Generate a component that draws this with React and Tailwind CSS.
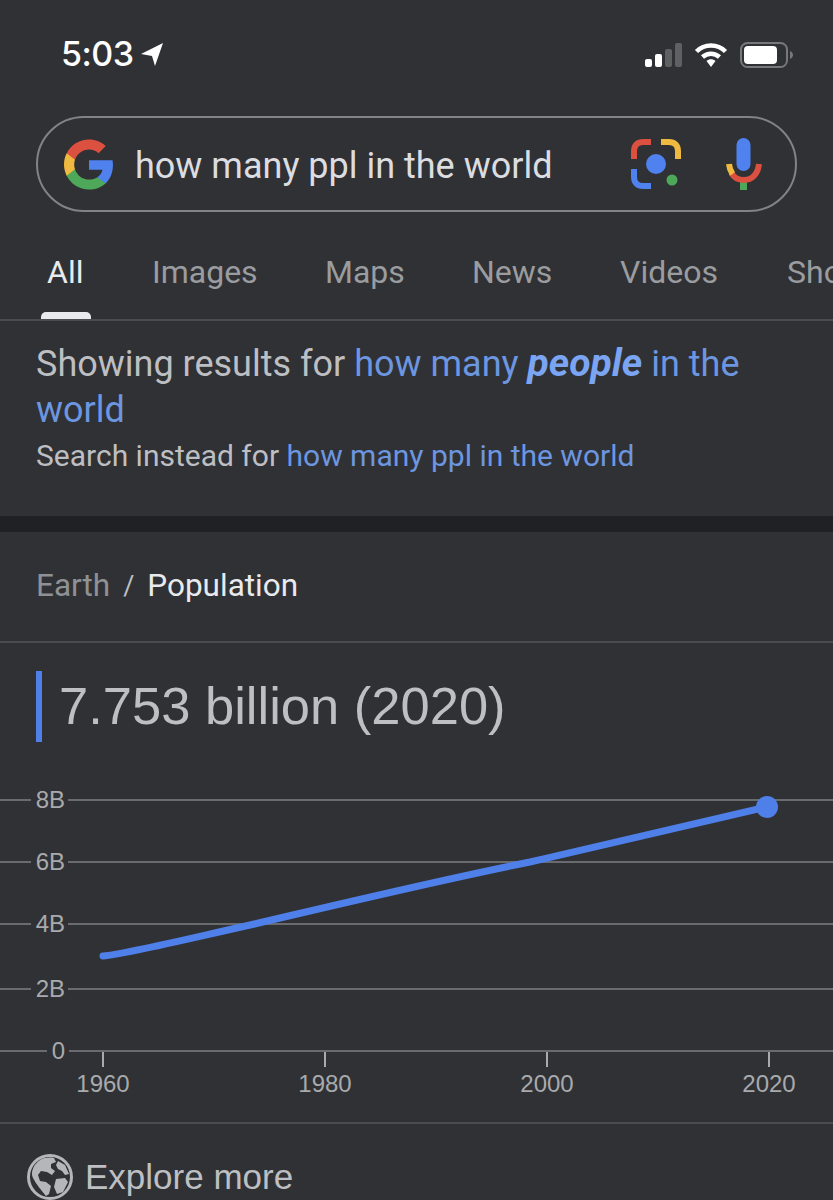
import React from 'react';

const TABS = [
    { label: 'All', className: 'w-[105px] text-[#e8eaed]' },
    { label: 'Images', className: 'w-[173px] text-[#9a9c9f]' },
    { label: 'Maps', className: 'w-[147px] text-[#9a9c9f]' },
    { label: 'News', className: 'w-[148px] text-[#9a9c9f]' },
    { label: 'Videos', className: 'w-[167px] text-[#9a9c9f]' },
    { label: 'Shopping', className: 'text-[#9a9c9f]' },
];

const GRID = [
    { y: 20, label: '8B', labelX: 65, stop: 31, start: 68 },
    { y: 82, label: '6B', labelX: 65, stop: 31, start: 68 },
    { y: 144, label: '4B', labelX: 65, stop: 31, start: 68 },
    { y: 209, label: '2B', labelX: 65, stop: 31, start: 68 },
    { y: 271, label: '0', labelX: 65, stop: 47, start: 69 },
];

const YEARS = [
    { x: 103, label: '1960' },
    { x: 325, label: '1980' },
    { x: 547, label: '2000' },
    { x: 769, label: '2020' },
];

function StatusBar() {
    return (
        <div className="h-[116px] flex items-start justify-between pt-[35px] pl-[61px] pr-[39px]">
            <div className="flex items-center gap-[6px] h-[38px]">
                <span className="text-[34px] leading-[38px] font-medium text-white font-['Inter',sans-serif] tracking-[-0.5px]">5:03</span>
                <svg width="24" height="25" viewBox="0 0 24 25">
                    <path d="M23 1 L1 12 L12 14 L15 24 Z" fill="#fff" />
                </svg>
            </div>
            <div className="flex items-center gap-[14px] h-[38px] pt-[2px]">
                <svg width="38" height="26" viewBox="0 0 38 26">
                    <rect x="1" y="17" width="7" height="8" rx="2" fill="#fff" />
                    <rect x="11" y="12" width="7" height="13" rx="2" fill="#fff" />
                    <rect x="21" y="7" width="7" height="18" rx="2" fill="#5f6062" />
                    <rect x="31" y="1" width="7" height="24" rx="2" fill="#5f6062" />
                </svg>
                <svg width="34" height="26" viewBox="0 0 34 26" fill="none" className="-ml-[2px]">
                    <path d="M2.5 9.5 C10.5 1.5 23.5 1.5 31.5 9.5" stroke="#fff" strokeWidth="4.5" />
                    <path d="M8.5 15 C13.5 10.5 20.5 10.5 25.5 15" stroke="#fff" strokeWidth="4.5" />
                    <path d="M12.5 19 C15 16.5 19 16.5 21.5 19 L17 25 Z" fill="#fff" />
                </svg>
                <svg width="54" height="28" viewBox="0 0 54 28" fill="none" className="-ml-[2px]">
                    <rect x="1" y="2" width="46" height="24" rx="6.5" stroke="#77787a" strokeWidth="2" />
                    <rect x="4" y="5" width="33" height="18" rx="4" fill="#fff" />
                    <path d="M50 10 C52 11 53 12.5 53 14 C53 15.5 52 17 50 18 Z" fill="#77787a" />
                </svg>
            </div>
        </div>
    );
}

function GoogleG() {
    return (
        <svg width="50" height="51" viewBox="0 0 24 24" className="shrink-0">
            <path fill="#4f81ef" d="M23.49 12.27c0-.79-.07-1.54-.19-2.27H12v4.51h6.47c-.29 1.48-1.14 2.73-2.4 3.58v3h3.86c2.26-2.09 3.56-5.17 3.56-8.82z" />
            <path fill="#4ea85a" d="M12 24c3.24 0 5.95-1.08 7.93-2.91l-3.86-3c-1.08.72-2.45 1.16-4.07 1.16-3.13 0-5.78-2.11-6.73-4.96H1.29v3.09C3.26 21.3 7.31 24 12 24z" />
            <path fill="#f0b93f" d="M5.27 14.29c-.25-.72-.38-1.49-.38-2.29s.14-1.57.38-2.29V6.62H1.29C.47 8.24 0 10.06 0 12s.47 3.76 1.29 5.38l3.98-3.09z" />
            <path fill="#dc5040" d="M12 4.75c1.77 0 3.35.61 4.6 1.8l3.42-3.42C17.95 1.19 15.24 0 12 0 7.31 0 3.26 2.7 1.29 6.62l3.98 3.09c.95-2.85 3.6-4.96 6.73-4.96z" />
        </svg>
    );
}

function LensIcon() {
    return (
        <svg width="50" height="50" viewBox="0 0 50 50" fill="none" className="shrink-0">
            <path d="M3 20 V12 C3 6.5 6.5 3 12 3 H20" stroke="#dc5040" strokeWidth="6" />
            <path d="M30 3 H38 C43.5 3 47 6.5 47 12 V20" stroke="#f0b93f" strokeWidth="6" />
            <path d="M3 30 V38 C3 43.5 6.5 47 12 47 H20" stroke="#4f81ef" strokeWidth="6" />
            <circle cx="25" cy="25" r="10" fill="#4f81ef" />
            <circle cx="41" cy="41" r="5.5" fill="#4ea85a" />
        </svg>
    );
}

function MicIcon() {
    return (
        <svg width="36" height="52" viewBox="0 0 36 52" fill="none" className="shrink-0">
            <rect x="10.5" y="0" width="14" height="33" rx="7" fill="#4f81ef" />
            <rect x="14" y="43" width="7" height="9" fill="#4ea85a" />
            <path d="M33 26 C32 36 26 42 18 42 C13 42 8 40 5.5 35" stroke="#dc5040" strokeWidth="6" />
            <path d="M3 26 C3.3 29.5 4.2 32.5 6.5 36" stroke="#f0b93f" strokeWidth="6" />
        </svg>
    );
}

function SearchBar() {
    return (
        <div className="mx-[36px] w-[761px] h-[96px] rounded-full border-2 border-[#828386] flex items-center pl-[26px] pr-[33px]">
            <GoogleG />
            <span className="ml-[21px] pt-[3px] text-[36px] text-[#dcdde0] font-['Roboto',sans-serif] whitespace-nowrap">how many ppl in the world</span>
            <div className="ml-auto flex items-center gap-[45px]">
                <LensIcon />
                <MicIcon />
            </div>
        </div>
    );
}

function Tabs() {
    return (
        <div className="relative mt-[36px] h-[73px] border-b-2 border-[#4b4c4f] overflow-hidden">
            <div className="flex pl-[47px] w-[1000px] text-[32px] leading-[49px] font-['Roboto',sans-serif]">
                {TABS.map((tab) => (
                    <div key={tab.label} className={tab.className}>{tab.label}</div>
                ))}
            </div>
            <div className="absolute left-[41px] bottom-0 w-[50px] h-[7px] bg-[#e8eaed] rounded-t-[5px]" />
        </div>
    );
}

function Correction() {
    return (
        <div className="h-[195px] px-[36px] pt-[20px] font-['Roboto',sans-serif]">
            <p className="text-[36px] leading-[46px] text-[#bdbfc2]">
                Showing results for <span className="text-[#6c96e0]">how many <b className="italic font-bold text-[39px] leading-[40px] text-[#7ba5f2]">people</b> in the world</span>
            </p>
            <p className="text-[30px] leading-[46px] text-[#bdbfc2]">
                Search instead for <span className="text-[#6c96e0]">how many ppl in the world</span>
            </p>
        </div>
    );
}

function GlobeIcon() {
    return (
        <svg width="46" height="46" viewBox="0 0 46 46" className="shrink-0">
            <circle cx="23" cy="23" r="21.5" fill="none" stroke="#b4b6b8" strokeWidth="3" />
            <path d="M13 6 C17 3.5 23 3 27 4 L29 8 L24 10 L24 14 L28 17 L25 21 L20 18 L14 17 L11 21 L13 27 L19 28 L24 32 L22 40 L19 42 C14 36 9 30 6 24 C3 18 7 10 13 6 Z" fill="#b4b6b8" />
            <path d="M31 7 L38 11 L42 20 L38 21 L35 17 L31 15 L29 11 Z" fill="#b4b6b8" />
            <path d="M29 25 L38 24 L41 28 L36 38 L30 40 L27 33 Z" fill="#b4b6b8" />
        </svg>
    );
}

function PopulationChart() {
    return (
        <svg width="833" height="342" viewBox="0 0 833 342" className="block mt-[38px] font-['Liberation_Sans',sans-serif]">
            {GRID.map((row) => (
                <g key={row.label}>
                    <line x1="0" y1={row.y} x2={row.stop} y2={row.y} stroke="#6a6b6e" strokeWidth="2" />
                    <line x1={row.start} y1={row.y} x2="833" y2={row.y} stroke="#6a6b6e" strokeWidth="2" />
                    <text x={row.labelX} y={row.y + 8} textAnchor="end" fontSize="24" fill="#a8aaad">{row.label}</text>
                </g>
            ))}
            {YEARS.map((year) => (
                <g key={year.label}>
                    <line x1={year.x} y1="272" x2={year.x} y2="287" stroke="#a8aaad" strokeWidth="2" />
                    <text x={year.x} y="312" textAnchor="middle" fontSize="24" fill="#a8aaad">{year.label}</text>
                </g>
            ))}
            <path
                d="M103 176 C125 174 170 163 250 145 C340 124 440 100 530 82 C610 64 690 45 767 27"
                fill="none"
                stroke="#4f7fe8"
                strokeWidth="7"
                strokeLinecap="round"
            />
            <circle cx="767" cy="27" r="11" fill="#4f7fe8" />
        </svg>
    );
}

export default function App() {
    return (
        <div className="w-[833px] h-[1200px] overflow-hidden bg-[#303134]">
            <StatusBar />
            <SearchBar />
            <Tabs />
            <Correction />
            <div className="h-[16px] bg-[#202124]" />
            <div className="h-[111px] border-b-2 border-[#4b4c4f] flex items-center pl-[36px] pb-[1px] text-[31.5px] font-['Roboto',sans-serif]">
                <span className="text-[#8f9194]">Earth</span>
                <span className="text-[#bdbfc2] ml-[13px] mr-[13px] text-[27px]">/</span>
                <span className="text-[#e8eaed]">Population</span>
            </div>
            <div className="mt-[28px] ml-[36px] h-[71px] border-l-[6px] border-[#4f7fe8] pl-[17px] flex items-center text-[52.5px] text-[#bdbfc2] font-['Liberation_Sans',sans-serif]">
                7.753 billion (2020)
            </div>
            <PopulationChart />
            <div className="border-t-2 border-[#4b4c4f] pt-[27px] pl-[27px] flex items-center gap-[12px] text-[35px] text-[#bdbfc2] font-['Liberation_Sans',sans-serif]">
                <GlobeIcon />
                <span>Explore more</span>
            </div>
        </div>
    );
}
